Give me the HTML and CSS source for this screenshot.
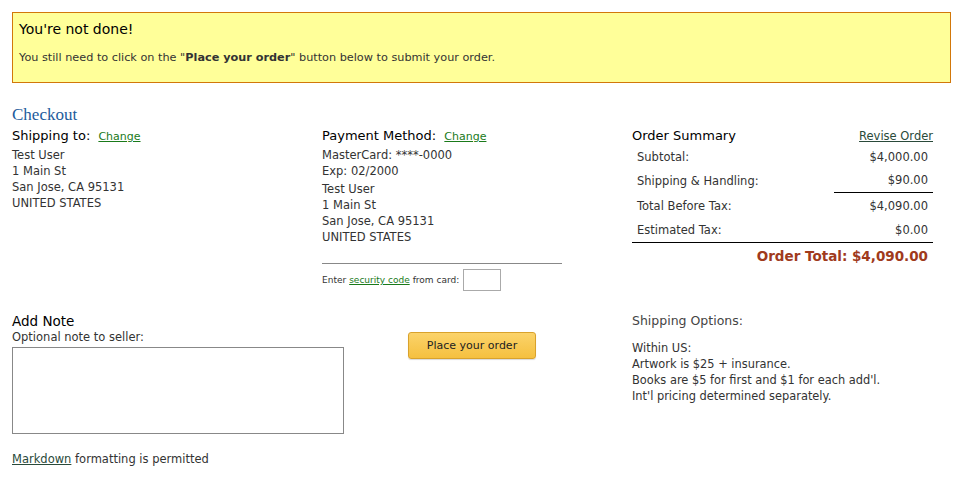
FILE: index.html
```html
<!DOCTYPE html>
<html>
<head>
<meta charset="utf-8">
<link rel="stylesheet" href="styles.css">
</head>
<body>
<div class="page">
  <div class="notice">
    <div class="notice-title">You're not done!</div>
    <div class="notice-text">You still need to click on the "<b>Place your order</b>" button below to submit your order.</div>
  </div>

  <h1 class="checkout">Checkout</h1>

  <div class="cols">
    <div class="col">
      <div class="col-head">Shipping to: <a class="link" href="#">Change</a></div>
      <div class="addr">
        <div>Test User</div>
        <div>1 Main St</div>
        <div>San Jose, CA 95131</div>
        <div>UNITED STATES</div>
      </div>
    </div>
    <div class="col">
      <div class="col-head">Payment Method: <a class="link" href="#">Change</a></div>
      <div class="addr">
        <div>MasterCard: ****-0000</div>
        <div>Exp: 02/2000</div>
      </div>
      <div class="addr addr2">
        <div>Test User</div>
        <div>1 Main St</div>
        <div>San Jose, CA 95131</div>
        <div>UNITED STATES</div>
      </div>
      <div class="rule"></div>
      <div class="sec">Enter <a class="link" href="#">security code</a> from card: <span class="secbox"></span></div>
    </div>
    <div class="col">
      <div class="sum-head"><span class="col-head">Order Summary</span><a class="link dark" href="#">Revise Order</a></div>
      <div class="sum">
        <div class="row"><span>Subtotal:</span><span>$4,000.00</span></div>
        <div class="row"><span>Shipping &amp; Handling:</span><span class="uline">$90.00</span></div>
        <div class="row"><span>Total Before Tax:</span><span>$4,090.00</span></div>
        <div class="row last"><span>Estimated Tax:</span><span>$0.00</span></div>
        <div class="total">Order Total: $4,090.00</div>
      </div>
    </div>
  </div>

  <div class="cols lower">
    <div class="col">
      <div class="note-head">Add Note</div>
      <div class="note-sub">Optional note to seller:</div>
      <div class="textarea"></div>
      <div class="md"><a class="link dark" href="#">Markdown</a> formatting is permitted</div>
    </div>
    <div class="col btncol">
      <div class="btn">Place your order</div>
    </div>
    <div class="col">
      <div class="ship-head">Shipping Options:</div>
      <div class="ship">
        <div>Within US:</div>
        <div>Artwork is $25 + insurance.</div>
        <div>Books are $5 for first and $1 for each add'l.</div>
        <div>Int'l pricing determined separately.</div>
      </div>
    </div>
  </div>
</div>
</body>
</html>
```

FILE: styles.css
```css
html, body { margin: 0; padding: 0; background: #fff; }
body { font-family: "DejaVu Sans", Verdana, sans-serif; color: #333; font-size: 11px; }
.page { padding: 12px; }

.notice {
  width: 937px;
  height: 69px;
  border: 1px solid #d2770a;
  background: #ffff99;
  box-sizing: content-box;
}
.notice-title { font-size: 14px; color: #000; padding: 7px 0 0 6px; line-height: 18px; }
.notice-text { font-size: 11.26px; color: #333; padding: 13px 0 0 6px; line-height: 14px; }

.checkout {
  font-family: "Liberation Serif", "Times New Roman", serif;
  font-weight: normal;
  font-size: 17px;
  color: #1d5b9c;
  margin: 23px 0 0 0;
  line-height: 18px;
}

.cols { display: grid; grid-template-columns: 310px 310px 301px; margin-top: 3px; }
.col-head { font-size: 13px; color: #000; line-height: 17px; }
.col-head .link { margin-left: 4px; }
.link { font-size: 11px; color: #1a7a1a; text-decoration: underline; }
.link.dark { color: #2a4a3a; }
.addr { font-size: 11.5px; line-height: 16px; color: #333; margin-top: 2px; }
.addr2 { margin-top: 2px; }
.rule { width: 240px; border-top: 1px solid #888; margin-top: 18px; }
.sec { font-size: 9px; color: #333; margin-top: 5px; display: flex; align-items: center; gap: 3px; }
.sec .link { font-size: 9px; }
.secbox { display: inline-block; width: 36px; height: 20px; border: 1px solid #aaa; margin-left: 1px; }

.sum-head { display: flex; justify-content: space-between; align-items: baseline; }
.sum-head .link { font-size: 11.5px; }
.sum { margin-top: 1px; }
.row { display: flex; justify-content: space-between; padding: 0 5px; line-height: 24.3px; font-size: 11.5px; color: #333; }
.row .uline { border-bottom: 1px solid #000; width: 99px; text-align: right; margin-right: -5px; padding-right: 5px; line-height: 22px; height: 24px; box-sizing: border-box; }
.row.last { border-bottom: 1px solid #000; }
.total { text-align: right; font-weight: bold; font-size: 13.5px; color: #a03a1c; padding-right: 5px; line-height: 26px; }

.lower { margin-top: 21px; }
.note-head { font-size: 13.5px; color: #000; line-height: 18px; }
.note-sub { font-size: 11.5px; line-height: 14px; color: #333; }
.textarea { width: 330px; height: 85px; border: 1px solid #888; margin-top: 3px; }
.md { font-size: 11.5px; margin-top: 18px; line-height: 14px; }
.md .link { font-size: 11.5px; }

.btncol { padding-left: 86px; padding-top: 20px; }
.btn {
  width: 126px; height: 25px;
  border: 1px solid #d9a22c;
  border-radius: 3px;
  background: linear-gradient(#fbd36a, #f5c040);
  color: #222;
  font-size: 11px;
  display: flex; align-items: center; justify-content: center;
  box-shadow: 0 1px 1px rgba(0,0,0,0.15);
}

.ship-head { font-size: 12.5px; color: #444; line-height: 17px; }
.ship { font-size: 11.4px; line-height: 16px; color: #333; margin-top: 11px; }
```
